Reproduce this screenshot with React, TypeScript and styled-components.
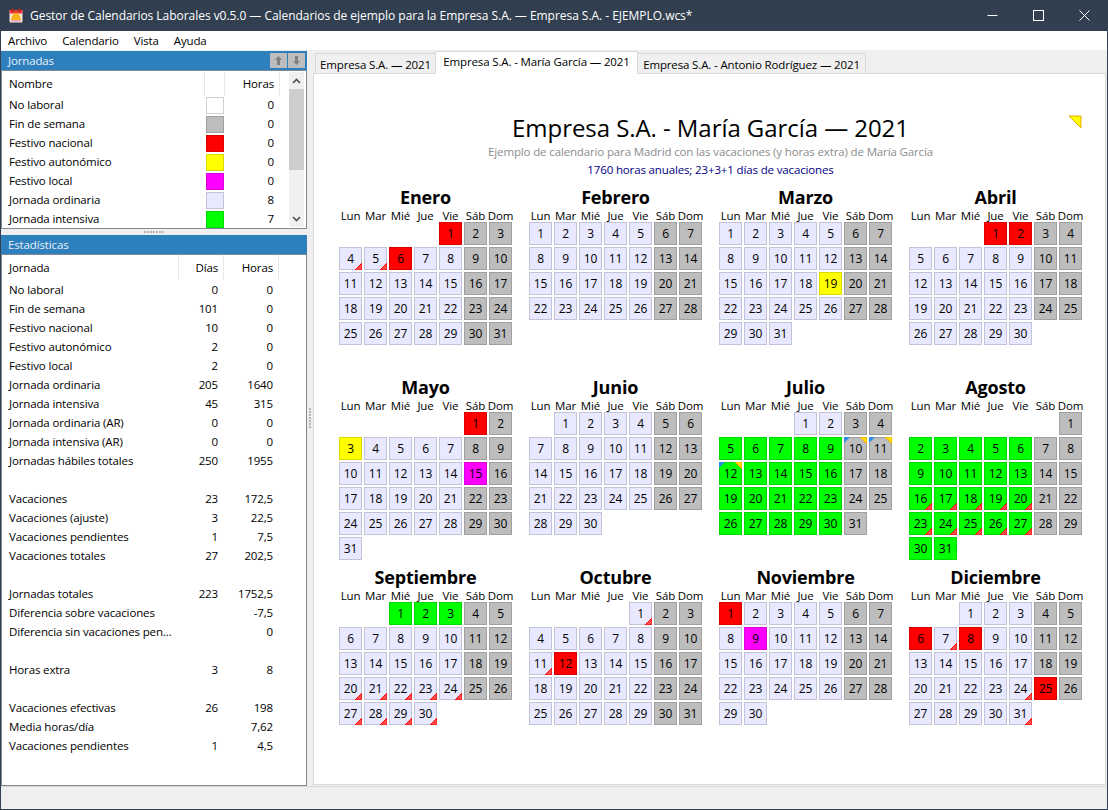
import React from 'react';
import styled, { createGlobalStyle } from 'styled-components';

const GlobalStyle = createGlobalStyle`
  html, body {
    margin: 0;
    padding: 0;
    background: #efefef;
    overflow: hidden;
  }
  * {
    box-sizing: border-box;
  }
  body {
    font-family: 'Open Sans', 'Liberation Sans', sans-serif;
    font-size: 11.5px;
    letter-spacing: -0.14px;
    color: #000;
  }
`;

const Window = styled.div`
  width: 1108px;
  height: 810px;
  display: flex;
  flex-direction: column;
  border: 1px solid #323f50;
  border-top: none;
  overflow: hidden;
`;

const TitleBar = styled.header`
  height: 31px;
  flex: none;
  margin: 0 -1px;
  background: #323f50;
  color: #fff;
  display: flex;
  align-items: center;
  padding: 0 1px 0 9px;
  font-size: 12px;
  letter-spacing: -0.04px;
`;

const TitleText = styled.span`
  flex: 1;
  margin-left: 7px;
  white-space: nowrap;
`;

const WindowButton = styled.div`
  width: 46px;
  height: 31px;
  display: flex;
  align-items: center;
  justify-content: center;
`;

const MenuBar = styled.nav`
  height: 19px;
  flex: none;
  background: #fff;
  display: flex;
  align-items: center;
  padding-left: 7px;
  gap: 15px;
`;

const Body = styled.div`
  flex: 1;
  min-height: 0;
  display: flex;
`;

const LeftColumn = styled.div`
  width: 306px;
  flex: none;
  display: flex;
  flex-direction: column;
  padding-top: 1px;
`;

const PanelHeader = styled.div`
  height: 19px;
  flex: none;
  background: #2e7fbd;
  color: #e8f2fa;
  display: flex;
  align-items: center;
  padding: 0 2px 0 7px;
`;

const PanelTitle = styled.span`
  flex: 1;
`;

const ArrowButton = styled.div`
  width: 17px;
  height: 15px;
  margin-left: 1px;
  background: #bdbdbd;
  display: flex;
  align-items: center;
  justify-content: center;
`;

const JornadasBox = styled.div`
  height: 159px;
  flex: none;
  background: #fff;
  border: 1px solid #808a94;
  display: flex;
  overflow: hidden;
`;

const JornadasList = styled.div`
  flex: 1;
  padding-top: 1px;
`;

const JornadaHead = styled.div`
  height: 24px;
  display: grid;
  grid-template-columns: 203px 20px 55px;
  align-items: center;
`;

const JornadaRow = styled.div`
  height: 19px;
  display: grid;
  grid-template-columns: 203px 20px 49px;
  align-items: center;
`;

const NameCell = styled.span`
  padding-left: 7px;
  white-space: nowrap;
  overflow: hidden;
  text-overflow: ellipsis;
`;

const JornadaName = styled(NameCell)`
  padding-bottom: 2px;
`;

const HeadCell = styled.span<{ $right?: boolean }>`
  height: 100%;
  display: flex;
  align-items: center;
  justify-content: ${(p) => (p.$right ? 'flex-end' : 'flex-start')};
  padding: ${(p) => (p.$right ? '0 5px 0 0' : '0 0 0 7px')};
  border-right: 1px solid #e8e8e8;
`;

const JornadaHeadCell = styled(HeadCell)`
  padding-bottom: 2px;
`;

const Swatch = styled.span<{ $bg: string; $edge: string }>`
  width: 18px;
  height: 17px;
  margin-left: 1px;
  background: ${(p) => p.$bg};
  border: 1px solid ${(p) => p.$edge};
`;

const Num = styled.span`
  text-align: right;
`;

const JornadaHours = styled(Num)`
  padding-bottom: 2px;
`;

const ScrollBar = styled.div`
  width: 15px;
  margin: 1px 2px 1px 0;
  background: #f0f0f0;
  display: flex;
  flex-direction: column;
  flex: none;
`;

const ScrollEnd = styled.div`
  height: 17px;
  flex: none;
  display: flex;
  align-items: center;
  justify-content: center;
`;

const ScrollThumb = styled.div`
  height: 81px;
  flex: none;
  background: #cdcdcd;
`;

const ScrollTrack = styled.div`
  flex: 1;
`;

const Splitter = styled.div`
  height: 6px;
  flex: none;
  display: flex;
  align-items: center;
  justify-content: center;
  gap: 1px;
`;

const Grip = styled.i`
  width: 2px;
  height: 2px;
  background: #b4b4b4;
`;

const StatsBox = styled.div`
  flex: 1;
  min-height: 0;
  background: #fff;
  border: 1px solid #808a94;
  overflow: hidden;
`;

const StatsHead = styled.div`
  height: 25px;
  display: grid;
  grid-template-columns: 177px 45px 55px;
  align-items: center;
`;

const StatsRow = styled.div`
  height: 19px;
  display: grid;
  grid-template-columns: 171px 45px 55px;
  align-items: center;
`;

const VSplitter = styled.div`
  width: 6px;
  flex: none;
  display: flex;
  flex-direction: column;
  align-items: center;
  justify-content: center;
  gap: 1px;
`;

const RightColumn = styled.div`
  flex: 1;
  min-width: 0;
  display: flex;
  flex-direction: column;
  padding: 1px 1px 1px 0;
`;

const TabRow = styled.div`
  height: 23px;
  flex: none;
  display: flex;
  align-items: flex-end;
  padding-left: 3px;
  position: relative;
  z-index: 1;
  margin-bottom: -1px;
`;

const Tab = styled.div<{ $active?: boolean; $w: number }>`
  height: ${(p) => (p.$active ? '23px' : '21px')};
  padding: ${(p) => (p.$active ? '0 0 3px' : '1px 0 0')};
  width: ${(p) => p.$w}px;
  background: ${(p) => (p.$active ? '#fff' : '#f0f0f0')};
  border: 1px solid #d9d9d9;
  border-bottom: ${(p) => (p.$active ? 'none' : '1px solid #d9d9d9')};
  display: flex;
  align-items: center;
  justify-content: center;
  white-space: nowrap;
  margin-left: -1px;
  position: relative;
  z-index: ${(p) => (p.$active ? 1 : 0)};
`;

const Page = styled.main`
  flex: 1;
  min-height: 0;
  background: #fff;
  border: 1px solid #d9d9d9;
  padding: 39px 23px 0 25px;
  position: relative;
`;

const Heading = styled.h1`
  margin: 0;
  height: 30px;
  line-height: 30px;
  font-size: 24px;
  font-weight: 400;
  letter-spacing: -0.06px;
  text-align: center;
`;

const Subtitle = styled.p`
  margin: 0;
  height: 17px;
  line-height: 17px;
  text-align: center;
  color: #8c8c8c;
`;

const Summary = styled.p`
  margin: 0 0 6px;
  height: 20px;
  line-height: 20px;
  text-align: center;
  color: #000080;
`;

const Corner = styled.svg`
  position: absolute;
  left: 754px;
  top: 41px;
`;

const MonthGrid = styled.div`
  display: grid;
  grid-template-columns: repeat(4, 173px);
  grid-auto-rows: 190px;
  column-gap: 17px;
`;

const MonthTitle = styled.h2`
  margin: 0;
  height: 22px;
  line-height: 22px;
  font-size: 18px;
  font-weight: 700;
  letter-spacing: -0.2px;
  text-align: center;
`;

const Days = styled.div`
  display: grid;
  grid-template-columns: repeat(7, 23px);
  grid-auto-rows: 23px;
  gap: 2px;
`;

const WeekHead = styled.div`
  display: grid;
  grid-template-columns: repeat(7, 23px);
  column-gap: 2px;
  height: 14px;
  line-height: 16px;
`;

const WeekName = styled.span`
  white-space: nowrap;
  display: flex;
  justify-content: center;
`;

type Kind = 'work' | 'off' | 'red' | 'yellow' | 'pink' | 'green';

const KIND_COLORS: Record<Kind, [string, string]> = {
  work: ['#e8e8ff', '#c2c2d9'],
  off: ['#bdbdbd', '#a0a0a0'],
  red: ['#ff0000', '#d90000'],
  yellow: ['#ffff00', '#d9d900'],
  pink: ['#ff00ff', '#d900d9'],
  green: ['#00ff00', '#00d900'],
};

const Day = styled.div<{ $kind: Kind }>`
  position: relative;
  background: ${(p) => KIND_COLORS[p.$kind][0]};
  border: 1px solid ${(p) => KIND_COLORS[p.$kind][1]};
  display: flex;
  align-items: center;
  justify-content: center;
  line-height: 1;
  font-size: 12px;
  letter-spacing: -0.2px;
`;

const Mark = styled.svg<{ $pos: 'tl' | 'tr' | 'br' }>`
  position: absolute;
  top: ${(p) => (p.$pos === 'br' ? 'auto' : '-1px')};
  bottom: ${(p) => (p.$pos === 'br' ? '-1px' : 'auto')};
  left: ${(p) => (p.$pos === 'tl' ? '-1px' : 'auto')};
  right: ${(p) => (p.$pos === 'tl' ? 'auto' : '-1px')};
`;

const StatusBar = styled.footer`
  height: 23px;
  flex: none;
  background: #efefef;
  border-top: 1px solid #d9d9d9;
`;

const WEEK = ['Lun', 'Mar', 'Mié', 'Jue', 'Vie', 'Sáb', 'Dom'];

const range = (a: number, b: number) => Array.from({ length: Math.max(b - a + 1, 0) }, (_, i) => a + i);

type MonthData = {
  name: string;
  offset: number;
  length: number;
  red?: number[];
  yellow?: number[];
  pink?: number[];
  green?: number[];
  marks?: number[];
  corners?: number[];
};

const MONTHS: MonthData[] = [
  { name: 'Enero', offset: 4, length: 31, red: [1, 6], marks: [4, 5] },
  { name: 'Febrero', offset: 0, length: 28 },
  { name: 'Marzo', offset: 0, length: 31, yellow: [19] },
  { name: 'Abril', offset: 3, length: 30, red: [1, 2] },
  { name: 'Mayo', offset: 5, length: 31, red: [1], yellow: [3], pink: [15] },
  { name: 'Junio', offset: 1, length: 30 },
  {
    name: 'Julio',
    offset: 3,
    length: 31,
    green: [...range(5, 9), ...range(12, 16), ...range(19, 23), ...range(26, 30)],
    corners: [10, 11, 12],
  },
  {
    name: 'Agosto',
    offset: 6,
    length: 31,
    green: [...range(2, 6), ...range(9, 13), ...range(16, 20), ...range(23, 27), 30, 31],
    marks: [...range(16, 20), ...range(23, 27)],
  },
  {
    name: 'Septiembre',
    offset: 2,
    length: 30,
    green: [1, 2, 3],
    marks: [...range(20, 24), ...range(27, 30)],
  },
  { name: 'Octubre', offset: 4, length: 31, red: [12], marks: [1, 11] },
  { name: 'Noviembre', offset: 0, length: 30, red: [1], pink: [9] },
  { name: 'Diciembre', offset: 2, length: 31, red: [6, 8, 25], marks: [7, 24, 31] },
];

const JORNADAS: [string, string, string, number][] = [
  ['No laboral', '#ffffff', '#d0d0d0', 0],
  ['Fin de semana', '#bdbdbd', '#a0a0a0', 0],
  ['Festivo nacional', '#ff0000', '#d90000', 0],
  ['Festivo autonómico', '#ffff00', '#d9d900', 0],
  ['Festivo local', '#ff00ff', '#d900d9', 0],
  ['Jornada ordinaria', '#e8e8ff', '#c2c2d9', 8],
  ['Jornada intensiva', '#00ff00', '#00d900', 7],
];

const STATS: [string, string, string][] = [
  ['No laboral', '0', '0'],
  ['Fin de semana', '101', '0'],
  ['Festivo nacional', '10', '0'],
  ['Festivo autonómico', '2', '0'],
  ['Festivo local', '2', '0'],
  ['Jornada ordinaria', '205', '1640'],
  ['Jornada intensiva', '45', '315'],
  ['Jornada ordinaria (AR)', '0', '0'],
  ['Jornada intensiva (AR)', '0', '0'],
  ['Jornadas hábiles totales', '250', '1955'],
  ['', '', ''],
  ['Vacaciones', '23', '172,5'],
  ['Vacaciones (ajuste)', '3', '22,5'],
  ['Vacaciones pendientes', '1', '7,5'],
  ['Vacaciones totales', '27', '202,5'],
  ['', '', ''],
  ['Jornadas totales', '223', '1752,5'],
  ['Diferencia sobre vacaciones', '', '-7,5'],
  ['Diferencia sin vacaciones pendientes', '', '0'],
  ['', '', ''],
  ['Horas extra', '3', '8'],
  ['', '', ''],
  ['Vacaciones efectivas', '26', '198'],
  ['Media horas/día', '', '7,62'],
  ['Vacaciones pendientes', '1', '4,5'],
];

const dayKind = (m: MonthData, day: number): Kind => {
  if (m.red?.includes(day)) return 'red';
  if (m.yellow?.includes(day)) return 'yellow';
  if (m.pink?.includes(day)) return 'pink';
  if (m.green?.includes(day)) return 'green';
  const col = (m.offset + day - 1) % 7;
  return col >= 5 ? 'off' : 'work';
};

const RedMark = () => (
  <Mark $pos="br" width="7" height="7" viewBox="0 0 7 7">
    <polygon points="7,0 7,7 0,7" fill="#ff5050" stroke="#ff0000" strokeWidth="1" />
  </Mark>
);

const BlueMark = () => (
  <Mark $pos="tl" width="6" height="6" viewBox="0 0 6 6">
    <polygon points="0,0 6,0 0,6" fill="#2e8ae6" />
  </Mark>
);

const YellowMark = () => (
  <Mark $pos="tr" width="7" height="7" viewBox="0 0 7 7">
    <polygon points="0,0 7,0 7,7" fill="#ffe000" stroke="#ffa500" strokeWidth="1" />
  </Mark>
);

const Month = ({ data }: { data: MonthData }) => (
  <section>
    <MonthTitle>{data.name}</MonthTitle>
    <WeekHead>
      {WEEK.map((w) => (
        <WeekName key={w}>{w}</WeekName>
      ))}
    </WeekHead>
    <Days>
      {range(1, data.offset).map((i) => (
        <span key={`e${i}`} />
      ))}
      {range(1, data.length).map((d) => (
        <Day key={d} $kind={dayKind(data, d)}>
          {d}
          {data.marks?.includes(d) && <RedMark />}
          {data.corners?.includes(d) && <BlueMark />}
          {data.corners?.includes(d) && <YellowMark />}
        </Day>
      ))}
    </Days>
  </section>
);

const AppIcon = () => (
  <svg width="14" height="15" viewBox="0 0 14 15">
    <rect x="0.5" y="2" width="13" height="12.5" rx="1" fill="#f4e6d8" />
    <rect x="0.5" y="2" width="13" height="3.5" fill="#e53935" />
    <rect x="2.5" y="0.5" width="2" height="3" fill="#b71c1c" />
    <rect x="9.5" y="0.5" width="2" height="3" fill="#b71c1c" />
    <path d="M2 12 C3 8 4 5 7 5 C10 5 11 8 12 12 Z" fill="#fdb515" />
    <rect x="2" y="12" width="10" height="1.5" fill="#e9a0c0" />
  </svg>
);

const Arrow = ({ up, color = '#7f7f7f' }: { up?: boolean; color?: string }) => (
  <svg width="9" height="11" viewBox="0 0 9 11">
    <path d={up ? 'M4.5 1 L8 5 H6 V10 H3 V5 H1 Z' : 'M4.5 10 L8 6 H6 V1 H3 V6 H1 Z'} fill={color} />
  </svg>
);

const Chevron = ({ up }: { up?: boolean }) => (
  <svg width="9" height="6" viewBox="0 0 9 6">
    <path d={up ? 'M1 5 L4.5 1.5 L8 5' : 'M1 1 L4.5 4.5 L8 1'} fill="none" stroke="#505050" strokeWidth="1.6" />
  </svg>
);

export default function App() {
  return (
    <>
      <GlobalStyle />
      <Window>
        <TitleBar>
          <AppIcon />
          <TitleText>
            Gestor de Calendarios Laborales v0.5.0 — Calendarios de ejemplo para la Empresa S.A. — Empresa S.A. -
            EJEMPLO.wcs*
          </TitleText>
          <WindowButton>
            <svg width="11" height="11" viewBox="0 0 11 11">
              <path d="M0.5 5.5 H10.5" stroke="#fff" />
            </svg>
          </WindowButton>
          <WindowButton>
            <svg width="11" height="11" viewBox="0 0 11 11">
              <rect x="0.5" y="0.5" width="10" height="10" fill="none" stroke="#fff" />
            </svg>
          </WindowButton>
          <WindowButton>
            <svg width="11" height="11" viewBox="0 0 11 11">
              <path d="M0.5 0.5 L10.5 10.5 M10.5 0.5 L0.5 10.5" stroke="#fff" />
            </svg>
          </WindowButton>
        </TitleBar>
        <MenuBar>
          <span>Archivo</span>
          <span>Calendario</span>
          <span>Vista</span>
          <span>Ayuda</span>
        </MenuBar>
        <Body>
          <LeftColumn>
            <PanelHeader>
              <PanelTitle>Jornadas</PanelTitle>
              <ArrowButton>
                <Arrow up />
              </ArrowButton>
              <ArrowButton>
                <Arrow />
              </ArrowButton>
            </PanelHeader>
            <JornadasBox>
              <JornadasList>
                <JornadaHead>
                  <JornadaHeadCell>Nombre</JornadaHeadCell>
                  <JornadaHeadCell />
                  <JornadaHeadCell $right>Horas</JornadaHeadCell>
                </JornadaHead>
                {JORNADAS.map(([name, bg, edge, hours]) => (
                  <JornadaRow key={name}>
                    <JornadaName>{name}</JornadaName>
                    <Swatch $bg={bg} $edge={edge} />
                    <JornadaHours>{hours}</JornadaHours>
                  </JornadaRow>
                ))}
              </JornadasList>
              <ScrollBar>
                <ScrollEnd>
                  <Chevron up />
                </ScrollEnd>
                <ScrollThumb />
                <ScrollTrack />
                <ScrollEnd>
                  <Chevron />
                </ScrollEnd>
              </ScrollBar>
            </JornadasBox>
            <Splitter>
              {range(1, 7).map((i) => (
                <Grip key={i} />
              ))}
            </Splitter>
            <PanelHeader>
              <PanelTitle>Estadísticas</PanelTitle>
            </PanelHeader>
            <StatsBox>
              <StatsHead>
                <HeadCell>Jornada</HeadCell>
                <HeadCell $right>Días</HeadCell>
                <HeadCell $right>Horas</HeadCell>
              </StatsHead>
              {STATS.map(([name, days, hours], i) => (
                <StatsRow key={i}>
                  <NameCell>{name}</NameCell>
                  <Num>{days}</Num>
                  <Num>{hours}</Num>
                </StatsRow>
              ))}
            </StatsBox>
          </LeftColumn>
          <VSplitter>
            {range(1, 7).map((i) => (
              <Grip key={i} />
            ))}
          </VSplitter>
          <RightColumn>
            <TabRow>
              <Tab $w={121}>Empresa S.A. — 2021</Tab>
              <Tab $active $w={203}>
                Empresa S.A. - María García — 2021
              </Tab>
              <Tab $w={229}>Empresa S.A. - Antonio Rodríguez — 2021</Tab>
            </TabRow>
            <Page>
              <Heading>Empresa S.A. - María García — 2021</Heading>
              <Subtitle>Ejemplo de calendario para Madrid con las vacaciones (y horas extra) de María García</Subtitle>
              <Summary>1760 horas anuales; 23+3+1 días de vacaciones</Summary>
              <Corner width="14" height="14" viewBox="0 0 14 14">
                <polygon points="1,1 13,1 13,13" fill="#ffff00" stroke="#e6a800" strokeWidth="1" />
              </Corner>
              <MonthGrid>
                {MONTHS.map((m) => (
                  <Month key={m.name} data={m} />
                ))}
              </MonthGrid>
            </Page>
          </RightColumn>
        </Body>
        <StatusBar />
      </Window>
    </>
  );
}
